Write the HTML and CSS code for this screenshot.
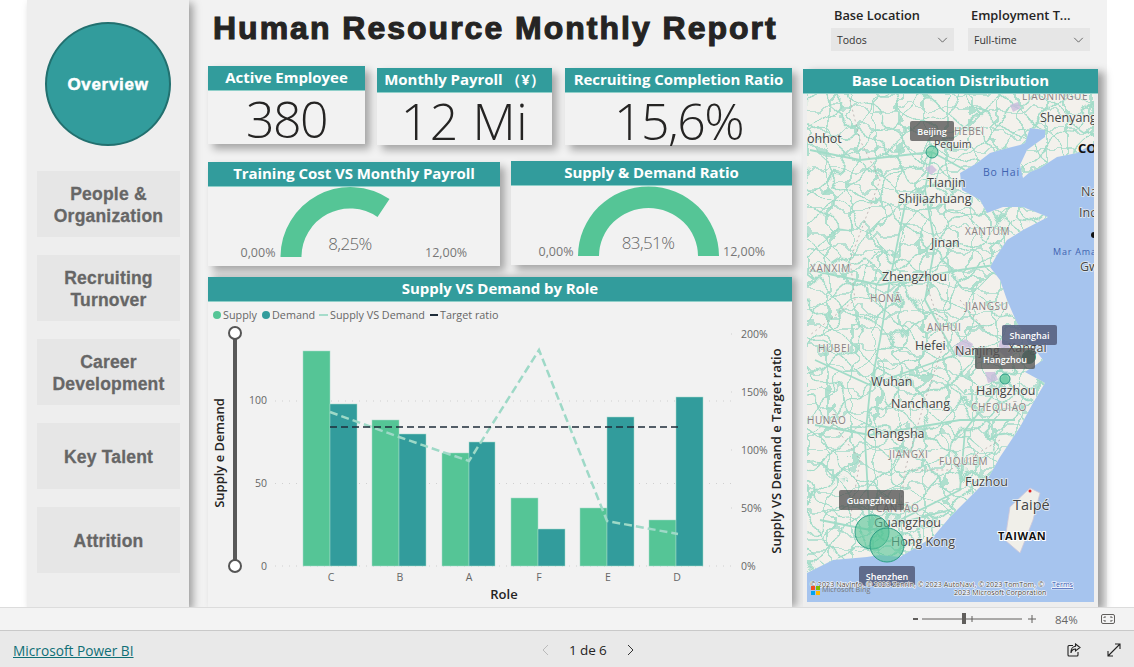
FILE: index.html
```html
<!DOCTYPE html>
<html lang="en">
<head>
<meta charset="utf-8">
<title>Human Resource Monthly Report</title>
<link rel="stylesheet" href="styles.css">
</head>
<body>
<div class="app">
  <div class="canvas">
    <nav class="nav">
      <div class="nav-current">Overview</div>
      <div class="nav-item">People &amp;<br>Organization</div>
      <div class="nav-item">Recruiting<br>Turnover</div>
      <div class="nav-item">Career<br>Development</div>
      <div class="nav-item">Key Talent</div>
      <div class="nav-item">Attrition</div>
    </nav>
    <main class="main">
      <header class="topbar">
        <h1 class="title">Human Resource Monthly Report</h1>
        <div class="slicers">
          <div class="slicer slicer-a">
            <div class="slicer-label">Base Location</div>
            <div class="slicer-box"><span>Todos</span><svg class="chev" viewBox="0 0 12 7"><path d="M1 1l5 5 5-5"/></svg></div>
          </div>
          <div class="slicer slicer-b">
            <div class="slicer-label">Employment T...</div>
            <div class="slicer-box"><span>Full-time</span><svg class="chev" viewBox="0 0 12 7"><path d="M1 1l5 5 5-5"/></svg></div>
          </div>
        </div>
      </header>

      <section class="left">
        <div class="row row-kpi">
          <div class="card kpi kpi-a"><div class="card-head">Active Employee</div><div class="kpi-value">380</div></div>
          <div class="card kpi kpi-b"><div class="card-head">Monthly Payroll （¥）</div><div class="kpi-value kpi-wide">12 Mi</div></div>
          <div class="card kpi kpi-c"><div class="card-head">Recruiting Completion Ratio</div><div class="kpi-value">15,6%</div></div>
        </div>
        <div class="row row-gauge">
          <div class="card gauge gauge-a">
            <div class="card-head">Training Cost VS Monthly Payroll</div>
            <svg class="gauge-svg" viewBox="208 187 292 79">
              <path class="gauge-arc" d="M280.500 257A70 70 0 0 1 389.500 199L377.500 217A48.500 48.500 0 0 0 301.500 257Z"/>
              <text class="g-min" x="275.500" y="257" text-anchor="end">0,00%</text>
              <text class="g-val" x="350" y="250" text-anchor="middle">8,25%</text>
              <text class="g-min" x="425" y="257">12,00%</text>
            </svg>
          </div>
          <div class="card gauge gauge-b">
            <div class="card-head">Supply &amp; Demand Ratio</div>
            <svg class="gauge-svg" viewBox="511 186 281 79">
              <path class="gauge-arc" d="M578 256A70.500 69.500 0 0 1 719 256H698A49.500 48 0 0 0 599 256Z"/>
              <text class="g-min" x="573.500" y="256" text-anchor="end">0,00%</text>
              <text class="g-val" x="648" y="249" text-anchor="middle">83,51%</text>
              <text class="g-min" x="723" y="256">12,00%</text>
            </svg>
          </div>
        </div>
        <div class="card chart">
          <div class="card-head">Supply VS Demand by Role</div>
          <svg class="chart-svg" viewBox="208 302 584 305">
            <g class="legend">
              <circle class="fill-green" cx="217" cy="315" r="4"/><text x="223" y="319">Supply</text>
              <circle class="fill-teal" cx="266" cy="315" r="4"/><text x="272" y="319">Demand</text>
              <path class="leg-line" d="M319 315h9"/><text x="330" y="319">Supply VS Demand</text>
              <path class="leg-target" d="M430 315h8"/><text x="440" y="319">Target ratio</text>
            </g>
            <g class="grid-lines">
              <path d="M275 566H733M275 483.500H733M275 401H733"/>
              <path d="M731 334h3M731 392h3M731 450h3M731 508h3"/>
            </g>
            <g class="axis-text">
              <text x="267" y="404" text-anchor="end">100</text>
              <text x="267" y="487" text-anchor="end">50</text>
              <text x="267" y="570" text-anchor="end">0</text>
              <text x="741" y="338">200%</text>
              <text x="741" y="396">150%</text>
              <text x="741" y="454">100%</text>
              <text x="741" y="512">50%</text>
              <text x="741" y="570">0%</text>
              <text x="331" y="581" text-anchor="middle">C</text>
              <text x="400" y="581" text-anchor="middle">B</text>
              <text x="469" y="581" text-anchor="middle">A</text>
              <text x="539" y="581" text-anchor="middle">F</text>
              <text x="608" y="581" text-anchor="middle">E</text>
              <text x="677" y="581" text-anchor="middle">D</text>
            </g>
            <g class="bars">
              <rect class="fill-green" x="303" y="351" width="27" height="215"/>
              <rect class="fill-teal" x="330" y="404" width="27" height="162"/>
              <rect class="fill-green" x="372" y="420" width="27" height="146"/>
              <rect class="fill-teal" x="399" y="434" width="27" height="132"/>
              <rect class="fill-green" x="442" y="453" width="27" height="113"/>
              <rect class="fill-teal" x="469" y="442" width="26" height="124"/>
              <rect class="fill-green" x="511" y="498" width="27" height="68"/>
              <rect class="fill-teal" x="538" y="529" width="27" height="37"/>
              <rect class="fill-green" x="580" y="508" width="27" height="58"/>
              <rect class="fill-teal" x="607" y="417" width="27" height="149"/>
              <rect class="fill-green" x="649" y="520" width="27" height="46"/>
              <rect class="fill-teal" x="676" y="397" width="27" height="169"/>
            </g>
            <path class="ratio-line" d="M330 412L399 437L469 461L539 350L607 521L678 534"/>
            <path class="target-line" d="M330 427H678"/>
            <path class="slider-line" d="M235 333V566"/>
            <circle class="slider-knob" cx="235" cy="333" r="6"/>
            <circle class="slider-knob" cx="235" cy="566" r="6"/>
            <text class="axis-title" transform="translate(224 453) rotate(-90)" text-anchor="middle">Supply e Demand</text>
            <text class="axis-title" transform="translate(781 451) rotate(-90)" text-anchor="middle">Supply VS Demand e Target ratio</text>
            <text class="axis-title role" x="504" y="599" text-anchor="middle">Role</text>
          </svg>
        </div>
      </section>

      <section class="card map-card">
        <div class="card-head">Base Location Distribution</div>
        <div class="map-body">
          <svg class="map-svg" viewBox="807 94 287 508">
            <defs>
              <clipPath id="landClip"><path d="M807 94H1094V143L1077 153L1057 157L1040 168L1030 172L1023 178L1020 165L1027 150L1045 137L1045 130L1030 128L1025 143L1020 145L1000 150L990 153L977 163L960 173L962 190L980 200L987 213L1003 207L1023 207L1048 217L1023 230L1007 240L997 255L990 267L1000 280L1007 300L1017 323L1030 343L1043 360L1025 372L1045 383L1033 403L1020 427L1000 457L987 480L967 500L950 517L933 537L915 548L900 557L880 555L867 557L833 560L807 573Z"/></clipPath>
              <pattern id="mesh" width="24" height="20" patternUnits="userSpaceOnUse">
                <path d="M0 10H24M12 0V20" class="mesh-line"/>
              </pattern>
              <pattern id="mesh2" width="37" height="31" patternUnits="userSpaceOnUse">
                <path d="M0 0L37 31M37 0L0 31" class="mesh-line"/>
              </pattern>
              <filter id="wobble" x="-5%" y="-5%" width="110%" height="110%">
                <feTurbulence type="fractalNoise" baseFrequency="0.04" numOctaves="3" seed="7"/>
                <feDisplacementMap in="SourceGraphic" scale="30" xChannelSelector="R" yChannelSelector="G"/>
              </filter>
              <filter id="wobble2" x="-5%" y="-5%" width="110%" height="110%">
                <feTurbulence type="fractalNoise" baseFrequency="0.03" numOctaves="2" seed="21"/>
                <feDisplacementMap in="SourceGraphic" scale="40" xChannelSelector="G" yChannelSelector="R"/>
              </filter>
            </defs>
            <rect class="sea" x="807" y="94" width="287" height="508"/>
            <g clip-path="url(#landClip)">
              <rect class="land" x="807" y="94" width="287" height="508"/>
              <rect x="790" y="80" width="320" height="530" fill="url(#mesh)" filter="url(#wobble)"/>
              <rect x="790" y="80" width="320" height="530" fill="url(#mesh2)" filter="url(#wobble2)"/>
              <path class="road-major" d="M932 152L925 190L905 205L890 280L880 340L870 390L865 440L870 530M932 152L965 170M925 190L935 245L925 300L955 355L1010 360M1005 380L965 430L960 490L880 530M810 150L860 160L932 152M810 270L880 285L960 270L995 265M815 360L870 385L955 355M815 425L870 435L960 420L1015 420M820 520L870 530L950 510"/>
              <path class="border" d="M850 100L860 140L880 180L850 260L855 300L810 335M925 280L945 340L925 400L905 470L900 510M960 300L985 330M1000 440L950 470L910 470M830 420L860 460L850 520"/>
              <path class="city" d="M955 345l10-6 8 5-3 8-10 5-6-5zM1000 340l10 2 5 10-9 6-8-8zM925 168l7-3 5 5-6 5zM1010 105l8-3 3 6-8 4zM985 372l10 0 3 8-10 3z"/>
            </g>
            <path class="land-island" d="M1030 488L1040 493L1033 520L1020 553L1005 540L1010 507Z"/>
            <circle class="dot-red" cx="1030" cy="491" r="1.500"/>
            <g class="map-city">
              <text x="807" y="143">ohhot</text><text x="1040" y="122">Shenyang</text><text x="934" y="148" class="small">Pequim</text>
              <text x="927" y="187">Tianjin</text><text x="898" y="203">Shijiazhuang</text><text x="931" y="247">Jinan</text>
              <text x="882" y="281">Zhengzhou</text><text x="915" y="350">Hefei</text><text x="955" y="355">Nanjing</text>
              <text x="1008" y="352">Xangai</text><text x="976" y="395">Hangzhou</text><text x="871" y="386">Wuhan</text>
              <text x="891" y="408">Nanchang</text><text x="867" y="438">Changsha</text><text x="965" y="486">Fuzhou</text>
              <text x="874" y="527">Guangzhou</text><text x="891" y="546">Hong Kong</text><text x="1013" y="510" class="big">Taipé</text>
              <text x="1081" y="196">Na</text><text x="1079" y="217">Inc</text><text x="1080" y="271">Gw</text>
            </g>
            <g class="map-region">
              <text x="1022" y="100">LIAONINGUE</text><text x="954" y="135">HEBEI</text><text x="965" y="235">XANTUM</text>
              <text x="810" y="272">XANXIM</text><text x="870" y="302">HONÃ</text><text x="965" y="310">JIANGSU</text>
              <text x="927" y="331">ANHUI</text><text x="818" y="352">HUBEI</text><text x="971" y="411">CHEQUIÃO</text>
              <text x="807" y="424">HUNÃO</text><text x="889" y="458">JIANGXI</text><text x="939" y="465">FUQUIÉM</text>
              <text x="876" y="512">CANTÃO</text>
            </g>
            <text class="map-sea" x="983" y="176">Bo Hai</text>
            <text class="map-sea small" x="1053" y="255">Mar Ama</text>
            <text class="map-bold" x="1078" y="153">CO</text>
            <text class="map-bold small" x="998" y="540">TAIWAN</text>
            <circle class="map-bold-dot" cx="1094" cy="235" r="3"/>
            <circle class="bubble" cx="932" cy="152" r="6"/>
            <circle class="bubble bubble-dark" cx="1029" cy="357" r="6.500"/>
            <circle class="bubble" cx="1005" cy="379" r="5"/>
            <circle class="bubble" cx="872" cy="532" r="17"/>
            <circle class="bubble" cx="887" cy="545" r="17"/>
            <g class="tip"><rect x="910" y="121" width="44" height="20" rx="2"/><text x="932" y="135">Beijing</text></g>
            <g class="tip tip-blue"><rect x="1002" y="325" width="55" height="20" rx="2"/><text x="1029.500" y="339">Shanghai</text></g>
            <g class="tip"><rect x="975" y="348" width="60" height="21" rx="2"/><text x="1005" y="363">Hangzhou</text></g>
            <g class="tip"><rect x="839" y="490" width="65" height="20" rx="2"/><text x="871.500" y="504">Guangzhou</text></g>
            <g class="tip tip-blue"><rect x="859" y="566" width="56" height="20" rx="2"/><text x="887" y="580">Shenzhen</text></g>
            <text class="attrib" x="810" y="587">© 2023 NavInfo, © 2023 Zenrin, © 2023 AutoNavi, © 2023 TomTom, ©</text>
            <text class="attrib attrib-link" x="1052" y="587">Terms</text>
            <text class="attrib" x="954" y="595">2023 Microsoft Corporation</text>
            <text class="attrib attrib-bing" x="822" y="592">Microsoft Bing</text>
            <g>
              <rect x="811" y="586" width="4" height="4" class="ms-r"/><rect x="816" y="586" width="4" height="4" class="ms-g"/>
              <rect x="811" y="591" width="4" height="4" class="ms-b"/><rect x="816" y="591" width="4" height="4" class="ms-y"/>
            </g>
          </svg>
        </div>
      </section>
    </main>
  </div>

  <div class="statusbar">
    <svg class="zoom-svg" viewBox="0 0 130 14">
      <path class="zoom-minus" d="M1 7h5"/>
      <path class="zoom-line" d="M10 7h100M60 4v6M116 7h8M120 3v8"/>
      <rect class="zoom-thumb" x="50" y="1" width="4" height="11"/>
    </svg>
    <span class="zoom-pct">84%</span>
    <svg class="fit-icon" viewBox="0 0 14 10"><rect x="0.500" y="0.500" width="13" height="9" rx="1.500"/><path d="M3 4V3h2M9 3h2v1M3 6v1h2M9 7h2V6"/></svg>
  </div>
  <footer class="footer">
    <a class="pbi-link" href="#">Microsoft Power BI</a>
    <div class="pager">
      <svg class="pager-chev pager-off" viewBox="0 0 7 12"><path d="M6 1L1 6l5 5"/></svg>
      <span class="pager-text">1 de 6</span>
      <svg class="pager-chev" viewBox="0 0 7 12"><path d="M1 1l5 5-5 5"/></svg>
    </div>
    <div class="foot-icons">
      <svg class="foot-icon" viewBox="0 0 14 14"><path d="M6 2.500H2A1 1 0 0 0 1 3.500V12a1 1 0 0 0 1 1h8a1 1 0 0 0 1-1V9"/><path d="M8.500 1L13 4.500 8.500 8V6C6 6 4.500 7.500 4 10 3.700 6.500 5.500 3.500 8.500 3.200Z"/></svg>
      <svg class="foot-icon" viewBox="0 0 14 14"><path d="M1 13L13 1M8 1h5v5M1 8v5h5"/></svg>
    </div>
  </footer>
</div>
</body>
</html>
```

FILE: styles.css
```css
* { box-sizing: border-box; }
html, body { margin: 0; padding: 0; height: 100%; background: #fff; overflow: hidden; }
body { font-family: "Open Sans", "Liberation Sans", sans-serif; color: #252423; }
.app { width: 1134px; height: 667px; display: flex; flex-direction: column; }

.canvas { height: 607px; margin-left: 27px; width: 1080px; background: #f2f2f2; display: flex; flex: none; }

.nav { width: 162px; flex: none; background: #eeeeee; box-shadow: 4px 3px 8px rgba(0,0,0,.35); padding: 22px 9px 0 10px; display: flex; flex-direction: column; gap: 18px; position: relative; z-index: 1; }
.nav-current { width: 126px; height: 124px; margin: 0 0 7px 8px; padding-top: 2px; border-radius: 50%; background: #329c9c; border: 2.500px solid #22706f; color: #fff; font: bold 17px "Liberation Sans", sans-serif; letter-spacing: .7px; display: flex; align-items: center; justify-content: center; -webkit-text-stroke: .5px #fff; }
.nav-item { height: 66px; width: 143px; padding-top: 2px; background: #e6e6e6; color: #666; font: bold 17.500px/22px "Liberation Sans", sans-serif; letter-spacing: .2px; text-align: center; display: flex; align-items: center; justify-content: center; -webkit-text-stroke: .3px #666; }

.main { flex: 1; display: grid; grid-template-columns: 584px 295px; grid-template-rows: 66px 1fr; column-gap: 11px; padding-left: 19px; min-width: 0; }
.topbar { grid-column: 1 / 3; display: flex; justify-content: space-between; padding-right: 8px; }
.title { margin: 10px 0 0 5px; font: bold 32px/36px "Liberation Sans", sans-serif; letter-spacing: 2px; color: #252423; -webkit-text-stroke: 1.100px #252423; white-space: nowrap; }
.slicers { display: flex; gap: 14px; padding-top: 7px; }
.slicer { display: flex; flex-direction: column; }
.slicer-a { width: 123px; }
.slicer-b { width: 122px; }
.slicer-label { font-size: 12.800px; font-weight: 600; line-height: 16px; padding: 0 0 0 3px; margin-bottom: 5px; white-space: nowrap; color: #252423; }
.slicer-box { height: 23px; background: #e6e6e6; display: flex; align-items: center; justify-content: space-between; padding: 0 6px 0 6px; font-size: 10.500px; color: #333; }
.chev { width: 11px; height: 6px; fill: none; stroke: #555; stroke-width: 1; }

.left { display: flex; flex-direction: column; min-width: 0; }
.row { display: flex; align-items: flex-start; }
.row-kpi { gap: 12px; height: 95px; }
.row-gauge { gap: 11px; height: 116px; }

.card { background: #f2f2f2; box-shadow: 5px 5px 8px rgba(0,0,0,.32); }
.card-head { height: 25px; background: #329c9c; color: #fff; font-size: 15px; font-weight: 700; line-height: 23px; text-align: center; white-space: nowrap; letter-spacing: -.05px; overflow: hidden; border-bottom: 1px solid #8fcfc9; }

.kpi { height: 77px; margin-top: 2px; }
.kpi-a { width: 157px; height: 78px; margin-top: 0; }
.kpi-b { width: 175px; margin-top: 2px; }
.kpi-c { width: 227px; margin-top: 2px; margin-left: 1px; }
.kpi-value { font-size: 50px; font-weight: 300; line-height: 52px; padding-top: 2px; text-align: center; letter-spacing: -1.500px; color: #252423; }
.kpi-wide { letter-spacing: .6px; }

.gauge { height: 104px; }
.gauge-a { width: 292px; margin-top: 1px; }
.gauge-b { width: 281px; }
.gauge-svg { display: block; width: 100%; height: 79px; }
.gauge-arc { fill: #55c596; }
.g-min { font-size: 12.500px; fill: #777; }
.g-val { font-size: 17px; font-weight: 300; letter-spacing: -.6px; fill: #666; }

.chart { flex: 1; min-height: 0; display: flex; flex-direction: column; box-shadow: 5px 0 8px rgba(0,0,0,.32); }
.chart-svg { display: block; width: 584px; height: 305px; }
.fill-green { fill: #55c596; }
.fill-teal { fill: #329c9c; }
.bars rect { stroke: #a6dccb; stroke-width: .5; }
.legend text { font-size: 10.800px; fill: #666; }
.leg-line { stroke: #a6dccb; stroke-width: 2; }
.leg-target { stroke: #1f2d3a; stroke-width: 2; }
.grid-lines path { stroke: #d0d0d0; stroke-width: 1; stroke-dasharray: 1 6; fill: none; }
.axis-text text { font-size: 10.500px; fill: #666; }
.ratio-line { fill: none; stroke: #9ed9c7; stroke-width: 2.500; stroke-dasharray: 8 4; }
.target-line { fill: none; stroke: #1f2d3a; stroke-width: 1.500; stroke-dasharray: 7 4; }
.slider-line { stroke: #595959; stroke-width: 4; }
.slider-knob { fill: #fff; stroke: #555; stroke-width: 2; }
.axis-title { font-size: 13px; font-weight: 600; fill: #252423; }

.map-card { width: 295px; height: 538px; margin-top: 3px; background: #eeeeee; box-shadow: 6px 3px 8px rgba(0,0,0,.35); }
.map-body { padding: 0 4px 0 4px; }
.map-svg { display: block; width: 287px; height: 508px; }
.sea { fill: #a6c4ee; }
.land { fill: #f3f1ec; }
.land-island { fill: #f0efe9; stroke: #cfc8d8; stroke-width: .8; }
.mesh-line { fill: none; stroke: #a3dcc9; stroke-width: 1.700; }
.road-major { fill: none; stroke: #a2dcc8; stroke-width: 1.800; }
.border { fill: none; stroke: #b5aaa8; stroke-width: .8; stroke-dasharray: 2 3; }
.city { fill: #c9bcdc; opacity: .8; }
.dot-red { fill: #d22; }
.map-city text { font-size: 12.500px; fill: #444; stroke: rgba(244,244,240,.8); stroke-width: 1.600px; paint-order: stroke; }
.map-city text.small { font-size: 10.500px; }
.map-city text.big { font-size: 14.500px; }
.map-region text { font-size: 10px; letter-spacing: .6px; fill: #8a7f7f; stroke: rgba(244,244,240,.8); stroke-width: 1.200px; paint-order: stroke; }
.map-sea { font-size: 10.500px; letter-spacing: .8px; fill: #3f63b0; }
.map-sea.small { font-size: 9px; }
.map-bold { font-size: 13px; font-weight: 700; fill: #111; }
.map-bold.small { font-size: 11px; letter-spacing: .6px; stroke: #fff; stroke-width: 2px; paint-order: stroke; }
.map-bold-dot { fill: #111; }
.bubble { fill: rgba(85,197,150,.6); stroke: #2c9d85; stroke-width: 1; }
.bubble-dark { fill: rgba(30,110,90,.8); }
.tip rect { fill: rgba(85,85,85,.78); }
.tip-blue rect { fill: rgba(85,95,125,.88); }
.tip text { font-size: 9px; font-weight: 600; fill: #fff; text-anchor: middle; }
.attrib { font-size: 7.200px; fill: #444; stroke: #fff; stroke-width: 1.200px; paint-order: stroke; }
.attrib-link { fill: #2b4fb0; text-decoration: underline; }
.attrib-bing { fill: #777; stroke: none; }
.ms-r { fill: #f25022; } .ms-g { fill: #7fba00; } .ms-b { fill: #00a4ef; } .ms-y { fill: #ffb900; }

.statusbar { height: 23px; flex: none; background: #f3f3f3; border-top: 1px solid #dcdcdc; display: flex; align-items: center; justify-content: flex-end; padding-right: 19px; position: relative; z-index: 2; }
.zoom-svg { width: 130px; height: 14px; margin-right: 13px; }
.zoom-line { fill: none; stroke: #605e5c; stroke-width: 1; }
.zoom-minus { fill: none; stroke: #605e5c; stroke-width: 2; }
.zoom-thumb { fill: #605e5c; }
.zoom-pct { font-size: 11.500px; color: #666; margin-right: 22px; width: 24px; }
.fit-icon { width: 14px; height: 10px; fill: none; stroke: #605e5c; stroke-width: 1; }

.footer { flex: 1; background: #e9e9e9; border-top: 1px solid #c9c9c9; display: grid; grid-template-columns: 529px auto 1fr; align-items: center; padding: 2px 0 0 13px; }
.pbi-link { font-size: 13.700px; color: #0f6f76; text-decoration: underline; width: 130px; white-space: nowrap; }
.pager { display: flex; align-items: center; gap: 20px; }
.pager-chev { width: 7px; height: 12px; fill: none; stroke: #333; stroke-width: 1; }
.pager-off { stroke: #bbb; }
.pager-text { font-size: 13.500px; color: #252423; font-weight: 500; letter-spacing: -.1px; }
.foot-icons { display: flex; justify-content: flex-end; gap: 26px; padding-right: 13px; }
.foot-icon { width: 14px; height: 14px; fill: none; stroke: #222; stroke-width: 1.100; }
```
